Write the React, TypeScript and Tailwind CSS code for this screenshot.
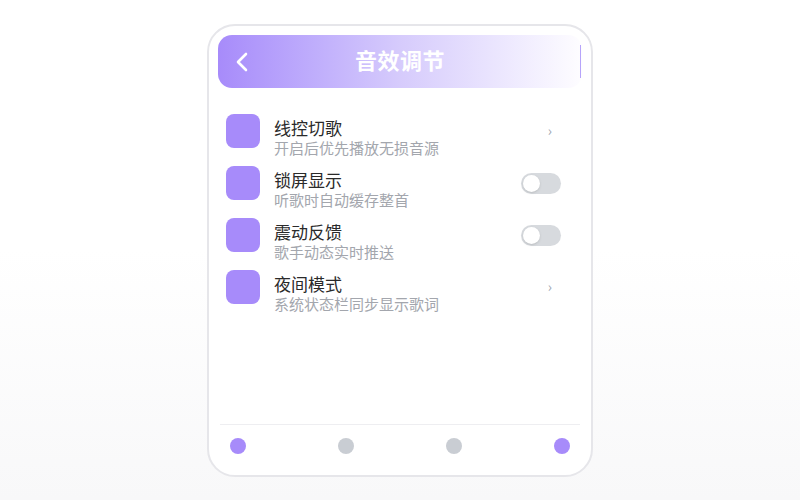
import React from "react";

const rows = [
  { title: "线控切歌", sub: "开启后优先播放无损音源", kind: "chevron" },
  { title: "锁屏显示", sub: "听歌时自动缓存整首", kind: "toggle" },
  { title: "震动反馈", sub: "歌手动态实时推送", kind: "toggle" },
  { title: "夜间模式", sub: "系统状态栏同步显示歌词", kind: "chevron" },
];

export default function App() {
  return (
    <div
      className="w-[800px] h-[500px] bg-gradient-to-b from-white via-white to-[#f8f8f9] flex justify-center pt-[24px]"
      style={{ fontFamily: '"Noto Sans CJK SC", "Noto Sans", sans-serif' }}
    >
      <div className="w-[386px] h-[453px] border-2 border-[#e6e6ea] rounded-[28px] bg-white flex flex-col px-[9px] pt-[9px]">
        <div className="h-[53px] rounded-[14px] bg-gradient-to-r from-[#a78bfa] via-[#d6cbfc] to-[#fefdff] relative flex items-center justify-center pb-[4px]">
          <div className="absolute right-[1px] top-[10px] bottom-[10px] w-[1.5px] bg-[#b6a4fa]" />
          <svg
            className="absolute left-[17px] top-[17px]"
            width="14"
            height="20"
            viewBox="0 0 14 20"
            fill="none"
          >
            <path d="M11 2 L3 10 L11 18" stroke="white" strokeWidth="2.6" strokeLinecap="round" strokeLinejoin="round" />
          </svg>
          <span className="text-white text-[22px] font-bold tracking-[0.5px]">音效调节</span>
        </div>
        <div className="mt-[17px] flex flex-col px-[8px]">
          {rows.map((r) => (
            <div key={r.title} className="h-[52px] flex items-center">
              <div className="w-[34px] h-[34px] rounded-[8px] bg-[#a78bfa] shrink-0" />
              <div className="ml-[14px] mt-[10px] flex flex-col flex-1">
                <span className="text-[17px] leading-[22px] text-[#2a2a2a]">{r.title}</span>
                <span className="text-[15px] leading-[17px] text-[#a3a6ad]">{r.sub}</span>
              </div>
              {r.kind === "toggle" ? (
                <div className="w-[40px] h-[21px] rounded-full bg-[#d7dade] mr-[13px] p-[2px] flex items-center">
                  <div className="w-[17px] h-[17px] rounded-full bg-white shadow-sm" />
                </div>
              ) : (
                <span className="text-[14px] text-[#9ca3af] mr-[22px] -mt-[2px]">›</span>
              )}
            </div>
          ))}
        </div>
        <div className="mt-auto mx-[2px] border-t border-[#eeeef1] pt-[13px] pb-[21px] px-[10px] flex justify-between">
          <div className="w-[16px] h-[16px] rounded-full bg-[#a78bfa]" />
          <div className="w-[16px] h-[16px] rounded-full bg-[#c9cdd3]" />
          <div className="w-[16px] h-[16px] rounded-full bg-[#c9cdd3]" />
          <div className="w-[16px] h-[16px] rounded-full bg-[#a78bfa]" />
        </div>
      </div>
    </div>
  );
}
